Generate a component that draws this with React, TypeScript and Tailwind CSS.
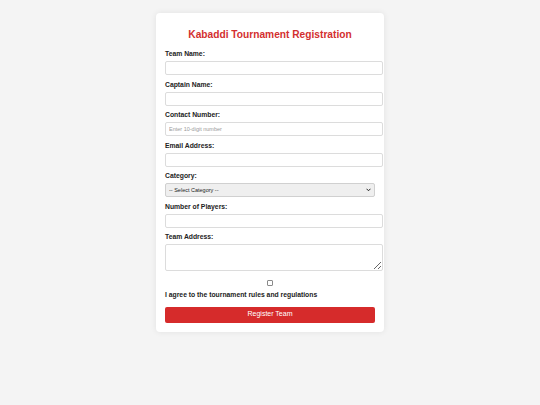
import { useState } from 'react';

const fields = [
  { id: 'team', label: 'Team Name:', type: 'text', placeholder: '' },
  { id: 'captain', label: 'Captain Name:', type: 'text', placeholder: '' },
  { id: 'contact', label: 'Contact Number:', type: 'tel', placeholder: 'Enter 10-digit number' },
  { id: 'email', label: 'Email Address:', type: 'email', placeholder: '' },
];

const inputCls =
  'block w-[218px] h-[14px] px-[3px] border border-[#dcdcdc] rounded-[2px] bg-white text-[5.5px] text-[#333] placeholder:text-[#9a9a9a] outline-none';

const labelCls = 'block text-[6.8px] leading-[10px] font-bold text-[#222] mb-[2px]';

export default function App() {
  const [agree, setAgree] = useState(false);

  return (
    <div className="min-h-[405px] bg-[#f4f4f4] pt-[13px] font-['Liberation_Sans',Arial,sans-serif]">
      <div className="mx-auto w-[228px] bg-white rounded-[4px] shadow-[0_0_6px_rgba(0,0,0,0.08)] pt-[14px] pb-[9px] px-[9px]">
        <h2 className="text-center text-[10.2px] leading-[16px] font-bold text-[#d32f2f] mb-[6px]">
          Kabaddi Tournament Registration
        </h2>

        <form onSubmit={(e) => e.preventDefault()}>
          {fields.map((f) => (
            <div key={f.id} className="mb-[4.5px]">
              <label htmlFor={f.id} className={labelCls}>
                {f.label}
              </label>
              <input id={f.id} type={f.type} placeholder={f.placeholder} className={inputCls} />
            </div>
          ))}

          <div className="mb-[4.5px]">
            <label htmlFor="category" className={labelCls}>
              Category:
            </label>
            <div className="relative">
              <select
                id="category"
                className="block w-full h-[14px] pl-[3px] appearance-none border border-[#d0d0d0] rounded-[2px] bg-[#efefef] text-[5.5px] text-[#222] outline-none"
                defaultValue=""
              >
                <option value="">-- Select Category --</option>
                <option value="men">Men</option>
                <option value="women">Women</option>
                <option value="junior">Junior</option>
              </select>
              <svg
                className="absolute right-[4px] top-[5px] w-[5px] h-[4px] pointer-events-none"
                viewBox="0 0 10 8"
              >
                <path d="M1 1.5 L5 5.5 L9 1.5" fill="none" stroke="#222" strokeWidth="2" />
              </svg>
            </div>
          </div>

          <div className="mb-[4.5px]">
            <label htmlFor="players" className={labelCls}>
              Number of Players:
            </label>
            <input id="players" type="number" className={inputCls} />
          </div>

          <div className="mb-[4.5px]">
            <label htmlFor="address" className={labelCls}>
              Team Address:
            </label>
            <textarea
              id="address"
              className="block w-[218px] h-[27px] px-[3px] border border-[#dcdcdc] rounded-[2px] bg-white text-[5.5px] outline-none resize-y"
            />
          </div>

          <div className="flex justify-center pt-[4px] pb-[4px]">
            <input
              type="checkbox"
              checked={agree}
              onChange={(e) => setAgree(e.target.checked)}
              className="appearance-none w-[6px] h-[6px] border border-[#8a8a8a] rounded-[1px] bg-white checked:bg-[#d32f2f]"
            />
          </div>
          <p className="text-[6.8px] leading-[10px] font-bold text-[#222] mb-[7px]">
            I agree to the tournament rules and regulations
          </p>

          <button
            type="submit"
            className="block w-full h-[16px] rounded-[2px] bg-[#d62b2b] text-white text-[7px]"
          >
            Register Team
          </button>
        </form>
      </div>
    </div>
  );
}
